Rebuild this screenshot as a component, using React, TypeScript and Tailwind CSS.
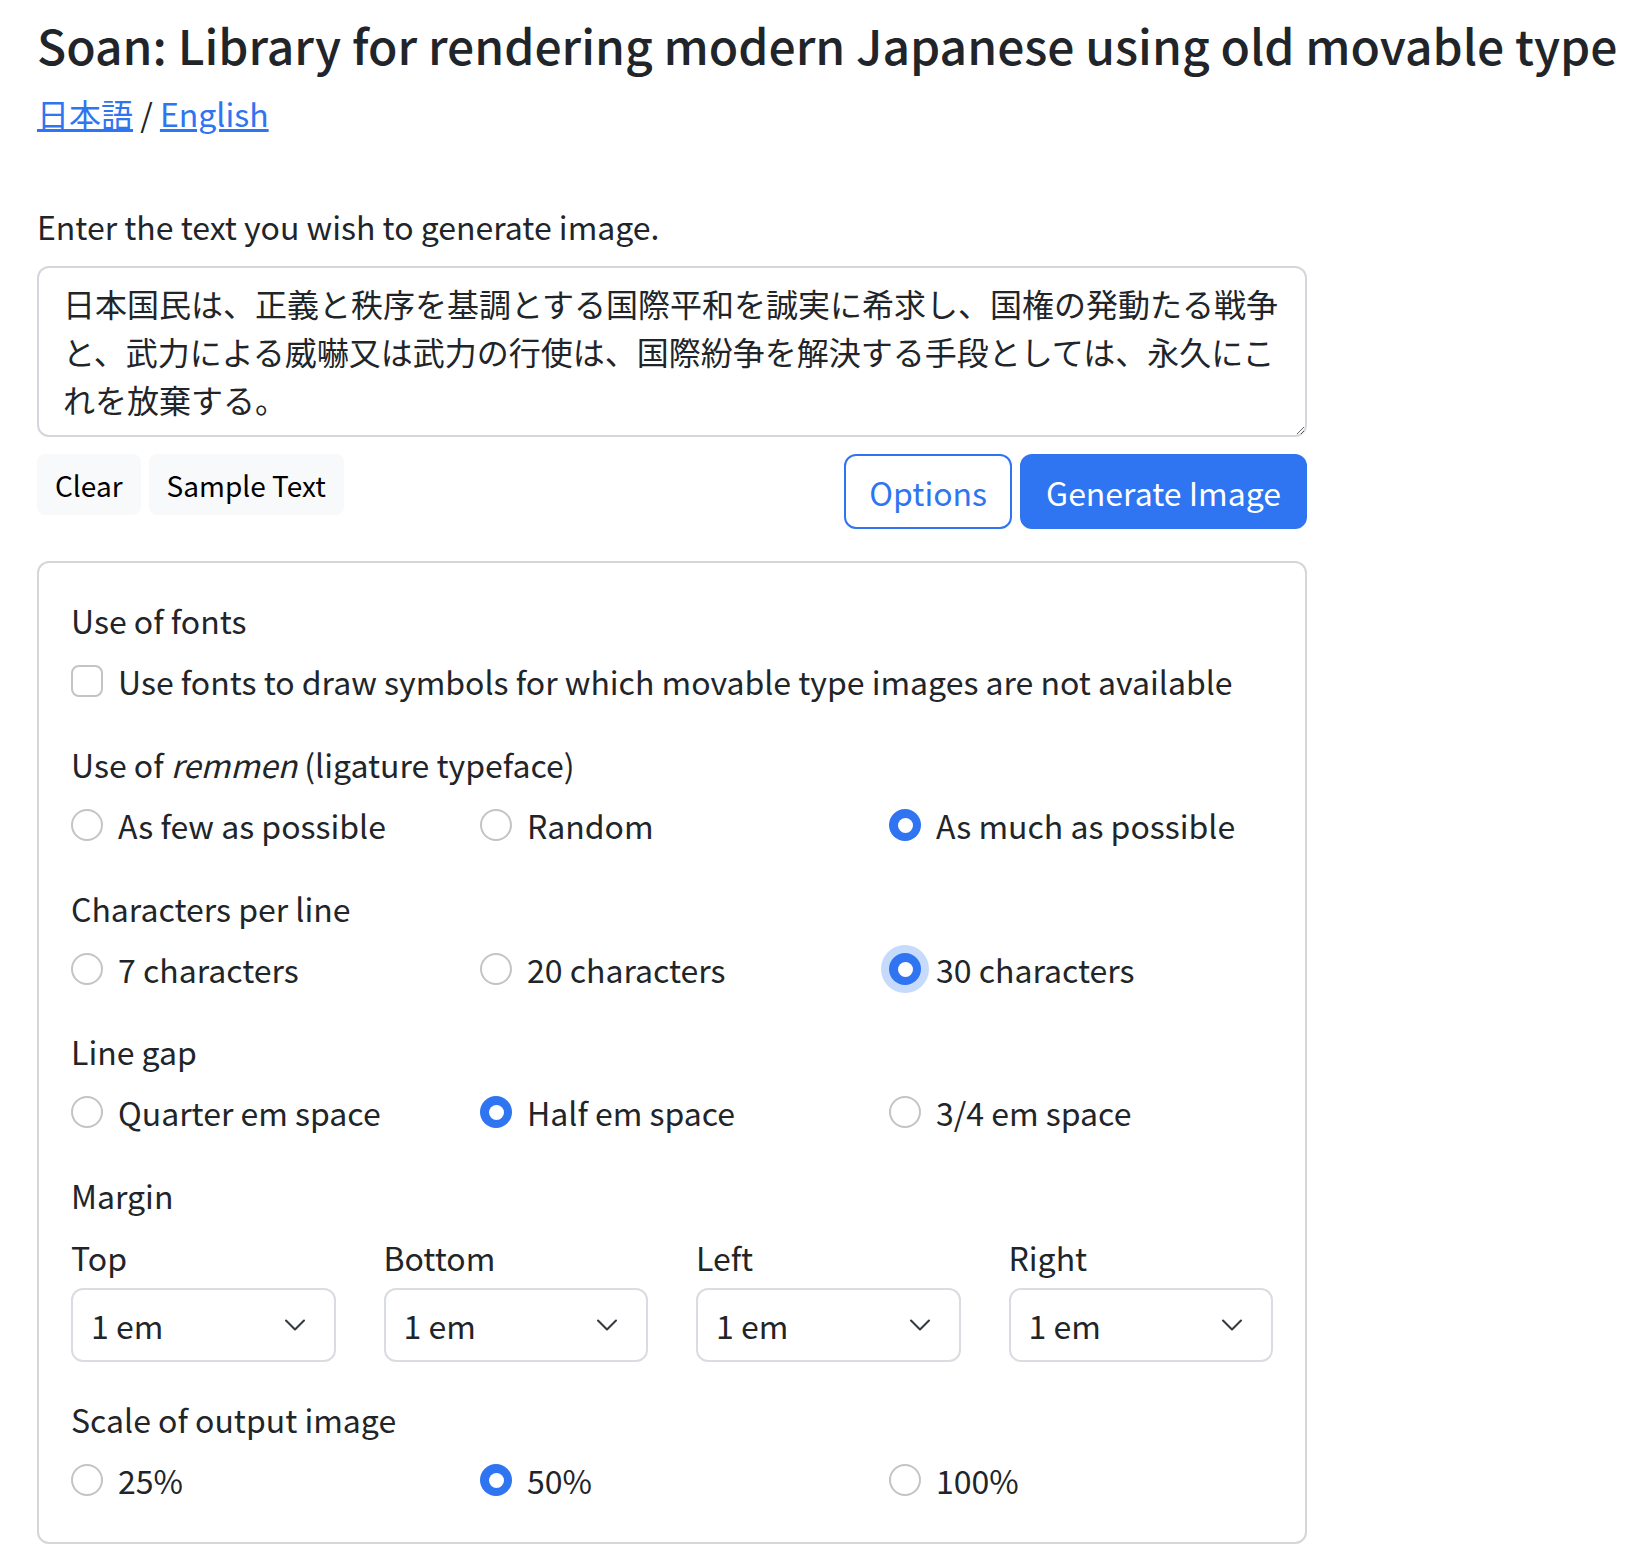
import React from "react";

function Radio({ label, checked, focus }: { label: string; checked?: boolean; focus?: boolean }) {
  return (
    <div className="flex items-center h-[48px]">
      {checked ? (
        <span
          className={
            "w-[32px] h-[32px] rounded-full bg-[#2f74f0] flex items-center justify-center shrink-0 " +
            (focus ? "shadow-[0_0_0_8px_#c6dafc]" : "")
          }
        >
          <span className="w-[15px] h-[15px] rounded-full bg-white" />
        </span>
      ) : (
        <span className="w-[32px] h-[32px] rounded-full border-2 border-[#c4c4c4] bg-white shrink-0" />
      )}
      <span className="ml-[15px] whitespace-nowrap">{label}</span>
    </div>
  );
}

function RadioRow({ items }: { items: { label: string; checked?: boolean; focus?: boolean }[] }) {
  return (
    <div className="grid grid-cols-[384px_384px_1fr] gap-x-[25px]">
      {items.map((it) => (
        <Radio key={it.label} {...it} />
      ))}
    </div>
  );
}

function Select({ label }: { label: string }) {
  return (
    <div>
      <div className="leading-[48px] mb-[7px]">{label}</div>
      <div className="h-[74px] border-2 border-[#d9dde1] rounded-[12px] bg-white flex items-center justify-between pl-[18px] pr-[27px]">
        <span>1 em</span>
        <svg width="24" height="24" viewBox="0 0 16 16" fill="none">
          <path d="M2 5l6 6 6-6" stroke="#343a40" strokeWidth="1.4" strokeLinecap="round" strokeLinejoin="round" />
        </svg>
      </div>
    </div>
  );
}

export default function App() {
  return (
    <div className="font-['Noto_Sans_CJK_JP',sans-serif] text-[#212529] bg-white min-h-[1568px] pl-[37px] pt-[15px] text-[32px] leading-[48px]">
      <h1 className="text-[48px] leading-[58px] font-medium whitespace-nowrap">
        Soan: Library for rendering modern Japanese using old movable type
      </h1>
      <div className="mt-[16px] leading-[48px]">
        <a href="#" className="text-[#2f74f0] underline">
          日本語
        </a>{" "}
        /{" "}
        <a href="#" className="text-[#2f74f0] underline">
          English
        </a>
      </div>

      <div className="w-[1270px] mt-[65px]">
        <div className="leading-[48px] mb-[16px]">Enter the text you wish to generate image.</div>
        <textarea
          className="block w-full h-[171px] border-2 border-[#d3d7db] rounded-[12px] px-[24px] py-[11px] text-[32px] leading-[48px] text-[#212529] overflow-hidden font-['Noto_Sans_CJK_JP',sans-serif] outline-none"
          defaultValue="日本国民は、正義と秩序を基調とする国際平和を誠実に希求し、国権の発動たる戦争と、武力による威嚇又は武力の行使は、国際紛争を解決する手段としては、永久にこれを放棄する。"
        />

        <div className="mt-[17px] flex justify-between items-start">
          <div className="flex gap-[8px]">
            <button className="h-[61px] px-[16px] border-2 border-[#f8f9fa] bg-[#f8f9fa] rounded-[8px] text-[28px] leading-[42px] text-black">
              Clear
            </button>
            <button className="h-[61px] px-[16px] border-2 border-[#f8f9fa] bg-[#f8f9fa] rounded-[8px] text-[28px] leading-[42px] text-black">
              Sample Text
            </button>
          </div>
          <div className="flex gap-[8px]">
            <button className="h-[75px] px-[23px] border-2 border-[#2f74f0] bg-white rounded-[12px] text-[32px] leading-[48px] text-[#2f74f0]">
              Options
            </button>
            <button className="h-[75px] px-[24px] border-2 border-[#2f74f0] bg-[#2f74f0] rounded-[12px] text-[32px] leading-[48px] text-white">
              Generate Image
            </button>
          </div>
        </div>

        <div className="mt-[32px] border-2 border-[#d6d6d6] rounded-[12px] pt-[33px] pb-[38px] px-[32px]">
          <div className="mb-[13px]">Use of fonts</div>
          <div className="flex items-center h-[48px]">
            <span className="w-[32px] h-[32px] rounded-[8px] border-2 border-[#c4c4c4] bg-white shrink-0" />
            <span className="ml-[15px] whitespace-nowrap">
              Use fonts to draw symbols for which movable type images are not available
            </span>
          </div>

          <div className="mt-[35px] mb-[13px]">
            Use of <i>remmen</i> (ligature typeface)
          </div>
          <RadioRow
            items={[
              { label: "As few as possible" },
              { label: "Random" },
              { label: "As much as possible", checked: true },
            ]}
          />

          <div className="mt-[35px] mb-[13px]">Characters per line</div>
          <RadioRow
            items={[
              { label: "7 characters" },
              { label: "20 characters" },
              { label: "30 characters", checked: true, focus: true },
            ]}
          />

          <div className="mt-[34px] mb-[13px]">Line gap</div>
          <RadioRow
            items={[
              { label: "Quarter em space" },
              { label: "Half em space", checked: true },
              { label: "3/4 em space" },
            ]}
          />

          <div className="mt-[35px] mb-[14px]">Margin</div>
          <div className="grid grid-cols-4 gap-x-[48px]">
            <Select label="Top" />
            <Select label="Bottom" />
            <Select label="Left" />
            <Select label="Right" />
          </div>

          <div className="mt-[33px] mb-[13px]">Scale of output image</div>
          <RadioRow
            items={[
              { label: "25%" },
              { label: "50%", checked: true },
              { label: "100%" },
            ]}
          />
        </div>
      </div>
    </div>
  );
}
